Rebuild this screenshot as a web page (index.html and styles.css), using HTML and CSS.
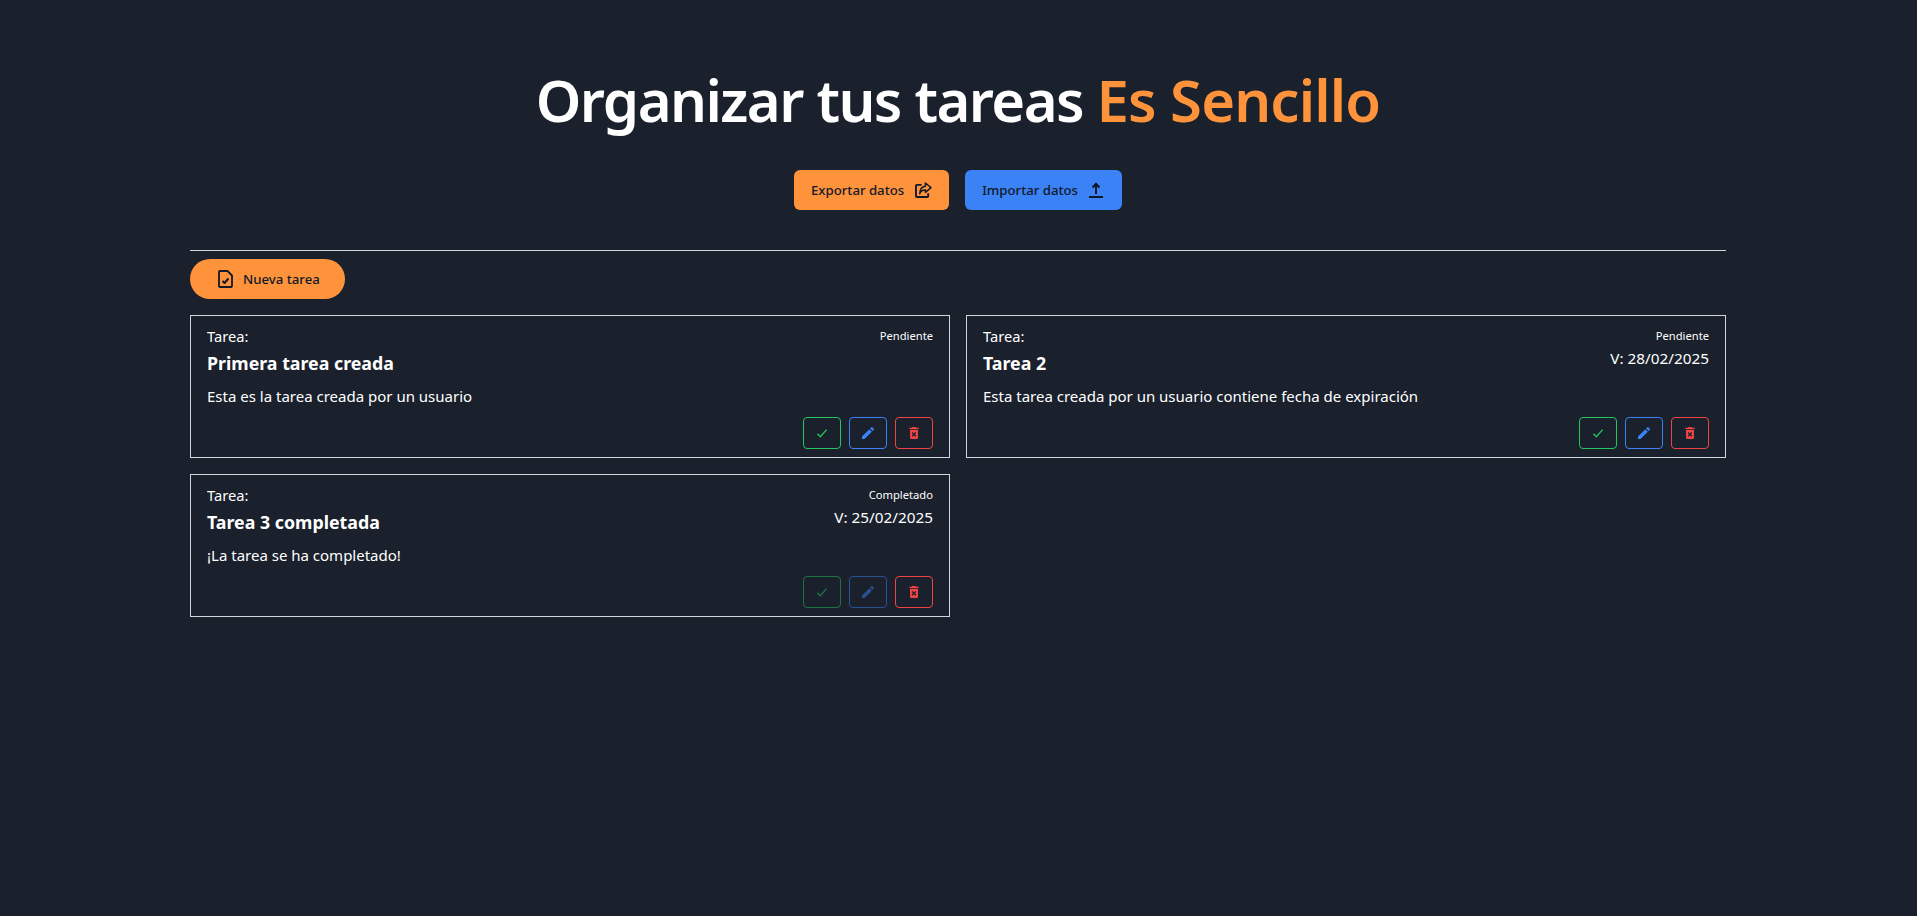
FILE: index.html
```html
<!DOCTYPE html>
<html lang="es">
<head>
<meta charset="utf-8">
<title>Organizar tus tareas</title>
<link rel="stylesheet" href="styles.css">
</head>
<body>
<main class="page">
  <h1 class="title">Organizar tus tareas <span class="accent">Es Sencillo</span></h1>
  <div class="data-actions">
    <button class="btn btn-orange">Exportar datos
      <svg class="ico-export" viewBox="0 0 18 17" fill="none" stroke="currentColor" stroke-linejoin="round"><path stroke-width="2" d="M7 3H2a1 1 0 0 0-1 1v11a1 1 0 0 0 1 1h11a1 1 0 0 0 1-1v-3"/><path stroke-width="1.500" d="M11 1l6 5-6 5V8.500C8 8.500 6 9.500 5 12.500 5 8 7.500 5 11 4.500z"/></svg>
    </button>
    <button class="btn btn-blue">Importar datos
      <svg class="ico-import" viewBox="0 0 14 16" fill="none" stroke="currentColor" stroke-width="2"><path d="M7 1v11M3.500 5.500L7 2l3.500 3.500M0 15h14"/></svg>
    </button>
  </div>
  <hr class="rule">
  <button class="btn btn-orange btn-pill">
    <svg class="ico-doc" viewBox="0 0 15 18" fill="none" stroke="currentColor" stroke-linejoin="round"><path stroke-width="1.800" d="M2 1h7.500L14 5.500V16a1 1 0 0 1-1 1H2a1 1 0 0 1-1-1V2a1 1 0 0 1 1-1z"/><path stroke-width="2" d="M4.500 11l2 2 4-4.500"/></svg>
    Nueva tarea
  </button>
  <section class="grid">
    <article class="card">
      <div class="card-head">
        <div><p class="label">Tarea:</p><h2 class="name">Primera tarea creada</h2></div>
        <div class="meta"><p class="status">Pendiente</p></div>
      </div>
      <p class="desc">Esta es la tarea creada por un usuario</p>
      <div class="tools">
        <button class="tool green"><svg viewBox="0 0 24 24" fill="none" stroke="currentColor" stroke-width="2"><path d="M5 13l4.500 4.500L19 7"/></svg></button>
        <button class="tool blue"><svg viewBox="0 0 24 24" fill="currentColor"><path d="M3 17.250V21h3.750L17.810 9.940l-3.750-3.750zM20.710 7.040a1 1 0 0 0 0-1.410l-2.340-2.340a1 1 0 0 0-1.410 0l-1.830 1.830 3.750 3.750z"/></svg></button>
        <button class="tool red"><svg viewBox="0 0 24 24" fill="currentColor"><path d="M6 19a2 2 0 0 0 2 2h8a2 2 0 0 0 2-2V7H6zm2.460-7.120l1.410-1.410L12 12.590l2.120-2.120 1.410 1.410L13.410 14l2.120 2.120-1.410 1.410L12 15.410l-2.120 2.120-1.410-1.410L10.590 14zM15.500 4l-1-1h-5l-1 1H5v2h14V4z"/></svg></button>
      </div>
    </article>
    <article class="card">
      <div class="card-head">
        <div><p class="label">Tarea:</p><h2 class="name">Tarea 2</h2></div>
        <div class="meta"><p class="status">Pendiente</p><p class="date">V: 28/02/2025</p></div>
      </div>
      <p class="desc">Esta tarea creada por un usuario contiene fecha de expiración</p>
      <div class="tools">
        <button class="tool green"><svg viewBox="0 0 24 24" fill="none" stroke="currentColor" stroke-width="2"><path d="M5 13l4.500 4.500L19 7"/></svg></button>
        <button class="tool blue"><svg viewBox="0 0 24 24" fill="currentColor"><path d="M3 17.250V21h3.750L17.810 9.940l-3.750-3.750zM20.710 7.040a1 1 0 0 0 0-1.410l-2.340-2.340a1 1 0 0 0-1.410 0l-1.830 1.830 3.750 3.750z"/></svg></button>
        <button class="tool red"><svg viewBox="0 0 24 24" fill="currentColor"><path d="M6 19a2 2 0 0 0 2 2h8a2 2 0 0 0 2-2V7H6zm2.460-7.120l1.410-1.410L12 12.590l2.120-2.120 1.410 1.410L13.410 14l2.120 2.120-1.410 1.410L12 15.410l-2.120 2.120-1.410-1.410L10.590 14zM15.500 4l-1-1h-5l-1 1H5v2h14V4z"/></svg></button>
      </div>
    </article>
    <article class="card">
      <div class="card-head">
        <div><p class="label">Tarea:</p><h2 class="name">Tarea 3 completada</h2></div>
        <div class="meta"><p class="status">Completado</p><p class="date">V: 25/02/2025</p></div>
      </div>
      <p class="desc">¡La tarea se ha completado!</p>
      <div class="tools">
        <button class="tool green dim"><svg viewBox="0 0 24 24" fill="none" stroke="currentColor" stroke-width="2"><path d="M5 13l4.500 4.500L19 7"/></svg></button>
        <button class="tool blue dim"><svg viewBox="0 0 24 24" fill="currentColor"><path d="M3 17.250V21h3.750L17.810 9.940l-3.750-3.750zM20.710 7.040a1 1 0 0 0 0-1.410l-2.340-2.340a1 1 0 0 0-1.410 0l-1.830 1.830 3.750 3.750z"/></svg></button>
        <button class="tool red"><svg viewBox="0 0 24 24" fill="currentColor"><path d="M6 19a2 2 0 0 0 2 2h8a2 2 0 0 0 2-2V7H6zm2.460-7.120l1.410-1.410L12 12.590l2.120-2.120 1.410 1.410L13.410 14l2.120 2.120-1.410 1.410L12 15.410l-2.120 2.120-1.410-1.410L10.590 14zM15.500 4l-1-1h-5l-1 1H5v2h14V4z"/></svg></button>
      </div>
    </article>
  </section>
</main>
</body>
</html>
```
FILE: styles.css
```css
* { box-sizing: border-box; }
html, body { margin: 0; height: 100%; }
body {
  background: #1a202c;
  color: #fff;
  font-family: "Noto Sans", "Open Sans", sans-serif;
  overflow: hidden;
  padding-right: 1px;
}
.page {
  width: 1536px;
  margin: 0 auto;
  padding-top: 70px;
  display: flex;
  flex-direction: column;
  align-items: flex-start;
}
.title {
  align-self: stretch;
  margin: 0;
  font-size: 58px;
  line-height: 60px;
  letter-spacing: -1.550px;
  font-weight: 600;
  text-align: center;
}
.accent { color: #fe933c; letter-spacing: -0.850px; }
.data-actions {
  align-self: stretch;
  display: flex;
  justify-content: center;
  gap: 16px;
  margin-top: 40px;
}
.btn {
  height: 40px;
  border: 0;
  border-radius: 6px;
  padding: 0 17px;
  display: inline-flex;
  align-items: center;
  gap: 11px;
  font: 500 13.200px/20px "Noto Sans", sans-serif;
  color: #111827;
}
.btn-orange { background: #fe933c; }
.btn-blue { background: #3b82f6; }
.btn-pill { border-radius: 20px; padding: 0 25px 0 28px; gap: 10px; }
.ico-export { width: 17px; height: 16px; flex: none; }
.ico-import { width: 14px; height: 16px; flex: none; margin-right: 2px; }
.ico-doc { width: 15px; height: 18px; flex: none; }
.rule {
  align-self: stretch;
  margin: 40px 0 8px;
  border: 0;
  border-top: 1px solid #d1d5db;
}
.grid {
  align-self: stretch;
  margin-top: 16px;
  display: grid;
  grid-template-columns: 1fr 1fr;
  gap: 16px;
}
.card {
  height: 143px;
  border: 1px solid #d1d5db;
  padding: 10px 16px 8px;
  display: flex;
  flex-direction: column;
}
.card-head { display: flex; justify-content: space-between; }
.label, .status, .date, .desc, .name { margin: 0; }
.label { font-size: 14.700px; line-height: 20px; }
.name { font-size: 17.800px; line-height: 28px; font-weight: 700; margin-top: 3px; }
.meta { text-align: right; }
.status { font-size: 11.200px; line-height: 20px; }
.date { font-size: 15.300px; line-height: 24px; }
.desc { font-size: 15px; line-height: 20px; margin-top: 9px; }
.tools { margin-top: auto; display: flex; justify-content: flex-end; gap: 8px; }
.tool {
  width: 38px;
  height: 32px;
  padding: 0;
  background: transparent;
  border: 1px solid currentColor;
  border-radius: 4px;
  display: flex;
  align-items: center;
  justify-content: center;
}
.tool svg { width: 16px; height: 16px; }
.green { color: #22c55e; }
.blue { color: #3b82f6; }
.red { color: #ef4444; }
.dim { opacity: .5; }
```
